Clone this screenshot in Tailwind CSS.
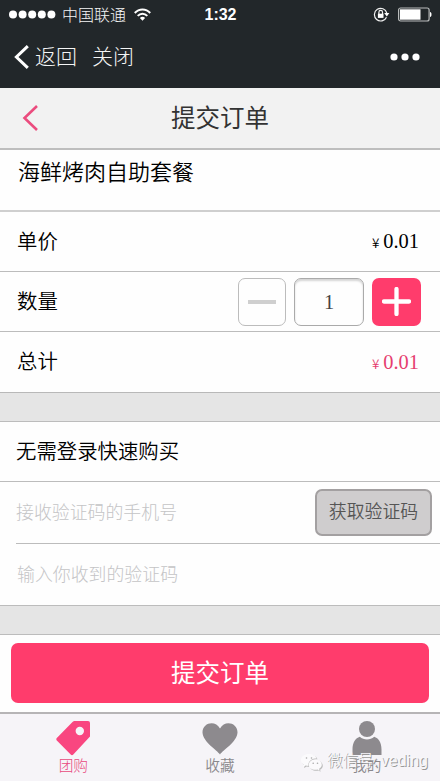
<!DOCTYPE html>
<html lang="zh-CN">
<head>
<meta charset="utf-8">
<meta name="viewport" content="width=device-width, initial-scale=1">
<title>提交订单</title>
<script src="https://cdn.jsdelivr.net/npm/@tailwindcss/browser@4"></script>
</head>
<body class="w-[440px] h-[781px] overflow-hidden bg-[#fefefe] font-['Noto_Sans_CJK_SC',sans-serif] font-[350] text-black whitespace-nowrap">
<div class="bg-[#22272a] h-[88px] text-[#f4f5f5] font-light">
  <div class="grid grid-cols-[1fr_auto_1fr] items-center h-7 pl-[9px] pr-2">
    <div class="flex items-center">
      <svg class="w-[47px] h-[9px] mr-[6px]" viewBox="0 0 47 9" fill="#fff"><circle cx="4" cy="4.5" r="4"/><circle cx="13.6" cy="4.5" r="4"/><circle cx="23.2" cy="4.5" r="4"/><circle cx="32.8" cy="4.5" r="4"/><circle cx="42.4" cy="4.5" r="4"/></svg>
      <span class="text-[16px] leading-[26px] pb-[2px]">中国联通</span>
      <svg class="w-[17px] h-[13px] ml-[8px]" viewBox="0 0 17 13" fill="none" stroke="#fff" stroke-width="2"><path d="M.8 5C5 .2 12 .2 16.2 5"/><path d="M3.7 7.9c2.8-3 6.800-3 9.600 0"/><path d="M5.900 9.900c1.500-1.600 3.700-1.600 5.200 0L8.500 12.700z" fill="#fff" stroke="none"/></svg>
    </div>
    <div class="font-['Liberation_Sans',sans-serif] font-bold text-[16px] leading-7 pt-px text-white">1:32</div>
    <div class="flex items-center justify-end gap-2">
      <svg class="w-[17px] h-[15px]" viewBox="0 0 17 15" fill="none" stroke="#f2f2f2" stroke-width="1.200"><path d="M13.500 10.200A6.300 6.300 0 1 1 13.800 6"/><path d="M11.200 6h5.200l-2.600 3.400z" fill="#fff" stroke="none"/><path d="M5.900 7V5.200a1.800 1.800 0 0 1 3.600 0V7"/><path d="M4.900 6.700h5.600v4.200H4.900z" fill="#fff" stroke="none"/></svg>
      <svg class="w-[34px] h-[15px]" viewBox="0 0 34 15"><rect x=".6" y="1" width="30.500" height="13" rx="2" fill="none" stroke="#b9bcbc" stroke-width="1.200"/><path d="M2 2.300h20.500v10.400H2z" fill="#fff"/><path d="M32 5c2 0 2 5 0 5z" fill="#fff"/></svg>
    </div>
  </div>
  <div class="flex items-center h-[58px] pl-[14px] pr-5 text-[21px]">
    <svg class="w-4 h-6 mr-[5px]" viewBox="0 0 16 24" fill="none" stroke="#fff" stroke-width="3"><path d="M13.800 1.200 2.400 12l11.400 10.800"/></svg>
    <span class="pb-[2px]">返回</span><span class="ml-[15px] pb-[2px]">关闭</span>
    <svg class="w-[30px] h-2 ml-auto" viewBox="0 0 30 8" fill="#fff"><circle cx="4" cy="4" r="3.600"/><circle cx="15" cy="4" r="3.600"/><circle cx="26" cy="4" r="3.600"/></svg>
  </div>
</div>
<header class="grid grid-cols-[1fr_auto_1fr] items-center h-[62px] bg-[#f2f2f2] border-b-2 border-[#bebebe] pl-[22px] pr-[22px]">
  <svg class="w-[17px] h-[26px]" viewBox="0 0 17 26" fill="none" stroke="#eb4c7e" stroke-width="2.600"><path d="M15 1 2.500 13 15 25"/></svg>
  <h1 class="text-[24.500px] font-normal text-[#333] pb-[2px]">提交订单</h1>
  <span></span>
</header>
<div class="h-[62px] border-b-2 border-[#cfcfcf] pl-[18px] text-[22px] leading-[41px]">海鲜烤肉自助套餐</div>
<div class="flex items-center justify-between h-[60px] border-b border-[#bcbcbc] pl-[17px] pr-[21px] text-[20.400px]"><span class="pb-[3px]">单价</span><span class="flex items-baseline font-['Liberation_Serif',serif] font-normal"><span class="font-['Noto_Sans_CJK_SC',sans-serif] font-[350] text-[13.500px] leading-5 mr-[4px]">¥</span>0.01</span></div>
<div class="flex items-center h-[60px] border-b border-[#bcbcbc] pl-[17px] pr-[19px] text-[20.400px]">
  <span class="mr-auto pb-[2px]">数量</span>
  <button class="flex items-center justify-center w-[48px] h-[48px] rounded-[7px] border border-[#bcbcbc]"><span class="w-7 h-[4px] bg-[#cfcfcf]"></span></button>
  <div class="w-[70px] h-[48px] ml-2 rounded-[7px] border border-[#aaa] shadow-[inset_0_2px_2px_#d5d5d5] text-center leading-[46px] text-[#444] font-['Liberation_Serif',serif]">1</div>
  <button class="flex items-center justify-center w-[49px] h-[48px] ml-2 rounded-[7px] bg-[#ff3c6c]"><svg class="w-[29px] h-[29px]" viewBox="0 0 29 29" stroke="#fff" stroke-width="4.300" stroke-linecap="round"><path d="M2 14.500h25M14.500 2v25"/></svg></button>
</div>
<div class="flex items-center justify-between h-[61px] border-b border-[#b8b8b8] pl-[17px] pr-[21px] text-[20.400px]"><span class="pb-[3px]">总计</span><span class="flex items-baseline font-['Liberation_Serif',serif] font-normal text-[#e63e70]"><span class="font-['Noto_Sans_CJK_SC',sans-serif] font-[350] text-[13.500px] leading-5 mr-[4px]">¥</span>0.01</span></div>
<div class="h-[29px] bg-[#e5e5e5] border-b border-[#bcbcbc]"></div>
<div class="h-[60px] border-b border-[#bcbcbc] pl-4 text-[20.400px] leading-[57px]">无需登录快速购买</div>
<div class="ml-4 flex items-center justify-between h-[62px] border-b border-[#bcbcbc] pr-2 text-[17.900px]">
  <span class="text-[#c4c4c6] font-light pb-[2px]">接收验证码的手机号</span>
  <button class="w-[117px] h-[47px] mt-[-1px] pb-[3px] rounded-[7px] border-2 border-[#a3a0a1] bg-[#cfcdce] text-[#555]">获取验证码</button>
</div>
<div class="h-[62px] border-b border-[#bcbcbc] pl-[17px] text-[17.900px] leading-[59px] font-light text-[#c4c4c6]">输入你收到的验证码</div>
<div class="h-[29px] bg-[#e5e5e5] border-b border-[#bcbcbc]"></div>
<div class="h-[79px] border-b-2 border-[#b6b4b6] pt-2 px-[11px]">
  <button class="w-full h-[60px] rounded-[7px] bg-[#ff3c6c] text-white text-[24.500px] font-normal pb-px">提交订单</button>
</div>
<nav class="relative grid grid-cols-3 h-[67px] bg-[#f6f4f8] text-[14.700px] leading-[20px] text-[#8a888b]">
  <div class="flex flex-col items-center pt-[6px] text-[#e84a80]">
    <svg class="w-[35px] h-[36px]" viewBox="0 0 35 36"><path fill="#f94680" fill-rule="evenodd" d="M18.500 1H32q2 0 2 2v13.500L17.300 34.600q-1.300 1.200-2.600 0L.8 20.600q-1-1.300 0-2.500L16.500 2Q17.500 1 18.500 1zM23.800 6.800a4.200 4.200 0 1 0 0 8.400 4.200 4.200 0 0 0 0-8.400z"/></svg>
    <span class="-mt-px font-light">团购</span>
  </div>
  <div class="flex flex-col items-center pt-[6px]">
    <svg class="w-[36px] h-[36px]" viewBox="0 0 36 36"><path fill="#8d8a8e" d="M18 34.500C15 30 1 22 .5 12.500.2 2.500 13.500-.5 18 8.500 22.500-.5 35.800 2.500 35.500 12.500 35 22 21 30 18 34.500z"/></svg>
    <span class="-mt-px">收藏</span>
  </div>
  <div class="flex flex-col items-center pt-[6px]">
    <svg class="w-[30px] h-[36px]" viewBox="0 0 30 36" fill="#8d8a8e"><circle cx="15" cy="9" r="8"/><path d="M.5 35V29.500C.5 22.500 3.500 18.200 7.800 16.800c4 3.600 10.400 3.600 14.400 0 4.300 1.400 7.300 5.700 7.300 12.700V35z"/></svg>
    <span class="-mt-px">我的</span>
  </div>
  <div class="absolute left-[301px] top-[34px] flex items-center">
    <svg class="w-[21px] h-[20px] mr-[5px] mt-[2px] drop-shadow-[1px_1px_0_#bbb]" viewBox="0 0 21 20" fill="#fbfafc"><path d="M8 3C3.500 3 0 5.600 0 9c0 2 1 3.500 2.600 4.600L2 16l2.700-1.400q1.300.4 2.700.4C7 10 10.500 7.400 15.500 7.400 14.700 4.700 11.600 3 8 3z"/><path d="M14.300 8.500c-3.700 0-6.500 2.300-6.500 5.200s2.800 5.100 6.500 5.100q1 0 2.200-.3l2.100 1.200-.5-2C19.700 16.800 20.800 15.400 20.800 13.700c0-2.900-2.800-5.200-6.500-5.200z"/><g fill="#aaa"><circle cx="5.500" cy="7" r=".8"/><circle cx="10.500" cy="7" r=".8"/><circle cx="12.200" cy="12.300" r=".8"/><circle cx="16.500" cy="12.300" r=".8"/></g></svg>
    <span class="text-[15.500px] leading-[22px] font-light text-[#f8f7fa] [text-shadow:1px_1px_0_#999]">微信号: <span class="font-['Liberation_Sans',sans-serif] text-[16px]">veding</span></span>
  </div>
</nav>
</body>
</html>
